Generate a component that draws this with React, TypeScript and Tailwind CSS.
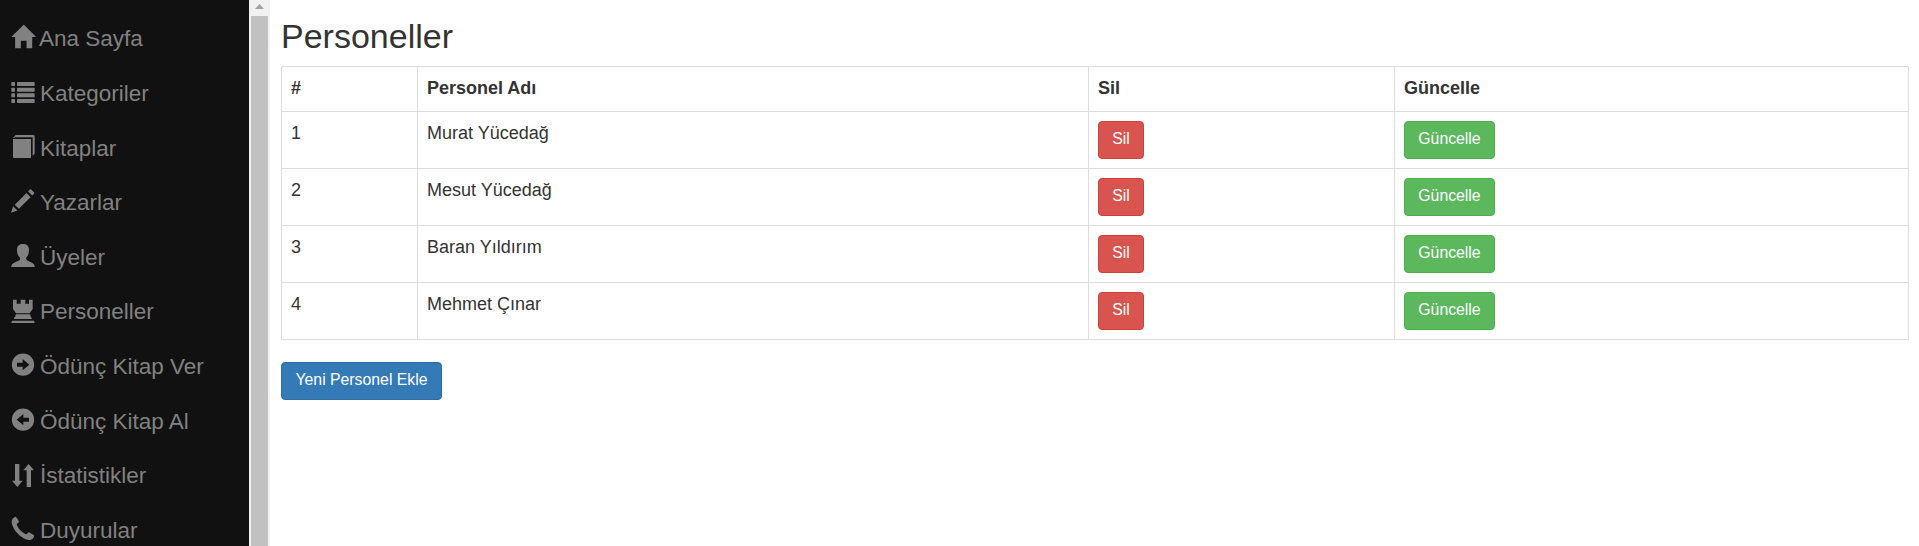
import type { ReactNode } from "react";

const icons: Record<string, ReactNode> = {
  home: (
    <path
      transform="translate(1 70) scale(.057 -.057)"
      d="M18 618l620 608q8 7 18.5 7t17.5 -7l608 -608q8 -8 5.5 -13t-12.5 -5h-175v-575q0 -10 -7.5 -17.5t-17.5 -7.5h-250q-10 0 -17.5 7.5t-7.5 17.5v375h-300v-375q0 -10 -7.5 -17.5t-17.5 -7.5h-250q-10 0 -17.5 7.5t-7.5 17.5v575h-175q-10 0 -12.5 5t5.5 13z"
    />
  ),
  list: (
    <>
      {[9, 26, 43, 60].map((y) => (
        <g key={y}>
          <rect x="1" y={y} width="11" height="12" rx="2" />
          <rect x="18" y={y} width="53" height="12" rx="2" />
        </g>
      ))}
    </>
  ),
  book: <path d="M6 15H60V72H9Q6 72 6 69ZM6 12L14 3H67Q71 3 71 7V59L65 65V10H13L9 12Z" />,
  pencil: (
    <path
      transform="translate(1 70) scale(.057 -.057)"
      d="M1011 1210q19 0 33 -13l153 -153q13 -14 13 -33t-13 -33l-99 -92l-214 214l95 96q13 14 32 14zM1013 800l-615 -614l-214 214l614 614zM317 96l-333 -112l110 335z"
    />
  ),
  user: (
    <path d="M36 3C47 3 54 9 54 20C54 30 52 37 47 42C45 44 45 50 48 52L64 60Q71 64 71 69V72H1V69Q1 64 8 60L25 52C28 50 28 44 25 42C20 37 18 30 18 20C18 9 25 3 36 3Z" />
  ),
  tower: (
    <path d="M6 5H17V17H29V5H43V17H54V5H65V33L56 46H15L6 33ZM14 49H58V54L62 59V63H9V59L14 54ZM3 68H69L71 75H1Z" />
  ),
  right: (
    <path
      fillRule="evenodd"
      d="M36 4.500A33.500 33.500 0 1 1 36 71.500A33.500 33.500 0 1 1 36 4.500ZM18 32V44H35V55L55 38L35 21V32Z"
    />
  ),
  left: (
    <path
      fillRule="evenodd"
      d="M36 4.500A33.500 33.500 0 1 1 36 71.500A33.500 33.500 0 1 1 36 4.500ZM54 32V44H37V55L17 38L37 21V32Z"
    />
  ),
  sort: <path d="M12 6H25V56H35L19 75L3 56H12ZM53 6L69 25H60V75H47V25H37Z" />,
  phone: (
    <path d="M11 3Q14 1 17 5L23 14Q25 18 22 20L17 24C19 36 34 51 47 55L51 50Q53 48 57 50L68 57Q71 59 69 62Q64 72 54 72C31 70 1 38 2 15Q3 8 11 3Z" />
  ),
};

const menu = [
  ["home", "Ana Sayfa"],
  ["list", "Kategoriler"],
  ["book", "Kitaplar"],
  ["pencil", "Yazarlar"],
  ["user", "Üyeler"],
  ["tower", "Personeller"],
  ["right", "Ödünç Kitap Ver"],
  ["left", "Ödünç Kitap Al"],
  ["sort", "İstatistikler"],
  ["phone", "Duyurular"],
];

const people = ["Murat Yücedağ", "Mesut Yücedağ", "Baran Yıldırım", "Mehmet Çınar"];

const row = "grid grid-cols-[136px_671px_306px_1fr] border-b border-[#ddd]";
const cell = "border-r border-[#ddd] px-[9px] pt-[9px] leading-[25px]";
const button =
  "flex h-[38px] items-start justify-center rounded-[4px] border pt-[5px] text-[15.800px] leading-[24px] whitespace-nowrap text-white";

export default function App() {
  return (
    <div className="flex h-[546px] w-full overflow-hidden bg-white font-['Liberation_Sans',Arial,sans-serif] text-[18px] text-[#333]">
      <nav className="w-[249px] shrink-0 overflow-hidden bg-[#111] pt-[12px]">
        {menu.map(([icon, label]) => (
          <a
            key={label}
            className={`flex h-[54.600px] items-center pl-[11px] text-[22.5px] whitespace-nowrap text-[#818181] ${
              icon === "home" ? "gap-[4px]" : "gap-[5px]"
            }`}
          >
            <svg viewBox="0 0 72 72" className="mb-[5px] h-6 w-6 shrink-0 overflow-visible" fill="currentColor">
              {icons[icon]}
            </svg>
            <span>{label}</span>
          </a>
        ))}
      </nav>
      <div className="flex w-[21px] shrink-0 flex-col items-center bg-[#f1f1f1]">
        <div className="flex h-4 items-start pt-[4px]">
          <svg viewBox="0 0 9 5" className="h-[5px] w-[9px]" fill="#a3a3a3">
            <path d="M0 5L4.500 0L9 5Z" />
          </svg>
        </div>
        <div className="w-[17px] grow bg-[#c1c1c1]" />
      </div>
      <main className="grow pr-[10px] pl-[11px]">
        <h2 className="pt-[16px] text-[34px] leading-[40px] font-normal">Personeller</h2>
        <div className="mt-[10px] border-t border-l border-[#ddd]">
          <div className={`${row} h-[45px] font-bold`}>
            <div className={cell}>#</div>
            <div className={cell}>Personel Adı</div>
            <div className={cell}>Sil</div>
            <div className={cell}>Güncelle</div>
          </div>
          {people.map((name, i) => (
            <div key={name} className={`${row} h-[57px]`}>
              <div className={cell}>{i + 1}</div>
              <div className={cell}>{name}</div>
              <div className={cell}>
                <button className={`${button} w-[46px] border-[#d43f3a] bg-[#d9534f]`}>Sil</button>
              </div>
              <div className={cell}>
                <button className={`${button} w-[91px] border-[#4cae4c] bg-[#5cb85c]`}>Güncelle</button>
              </div>
            </div>
          ))}
        </div>
        <button className={`${button} mt-[22px] w-[161px] border-[#2e6da4] bg-[#337ab7]`}>Yeni Personel Ekle</button>
      </main>
    </div>
  );
}
